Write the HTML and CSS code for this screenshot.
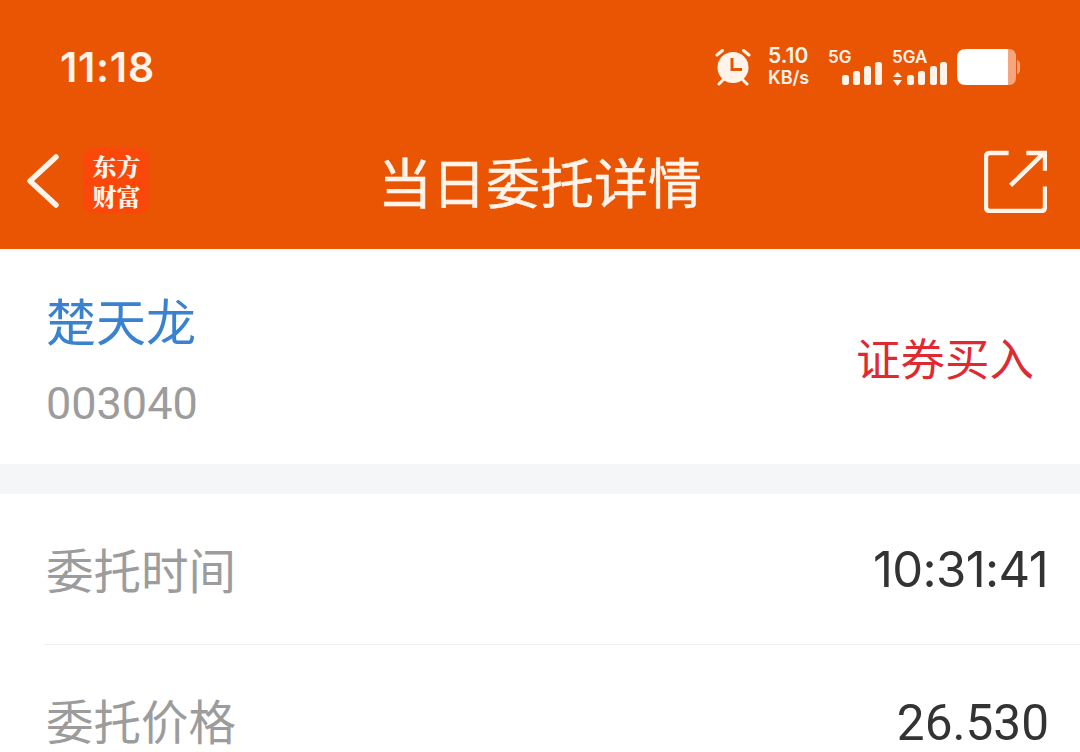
FILE: index.html
```html
<!DOCTYPE html>
<html lang="zh">
<head>
<meta charset="utf-8">
<title>当日委托详情</title>
<link rel="stylesheet" href="styles.css">
</head>
<body>
<div class="app">
  <header class="header">
    <div class="status">
      <span class="time">11:18</span>
      <div class="status-icons">
        <svg class="alarm" width="38" height="38" viewBox="0 0 38 38"><path d="M3 7 L8.5 2.5 M35 7 L29.5 2.5 M5 36 L10 31 M33 36 L28 31" stroke="#fff3ea" stroke-width="3" stroke-linecap="round"/><circle cx="19" cy="19.5" r="15.5" fill="#fff3ea"/><path d="M18 10 V21.5 H28" fill="none" stroke="#ea5504" stroke-width="3"/></svg>
        <div class="speed"><span>5.10</span><span class="unit">KB/s</span></div>
        <div class="signal sig-one">
          <span class="net">5G</span>
          <svg width="54" height="23" viewBox="0 0 54 23"><rect x="14" y="13" width="7" height="10" rx="2.5"/><rect x="25" y="9" width="7" height="14" rx="2.5"/><rect x="36" y="4" width="7" height="19" rx="2.5"/><rect x="47" y="0" width="7" height="23" rx="2.5"/></svg>
        </div>
        <div class="signal sig-two">
          <span class="net">5GA</span>
          <svg width="55" height="24" viewBox="0 0 55 24"><path d="M5.5 10 L10 15 H1 Z M5.5 24 L1 18 H10 Z" /><rect x="15" y="13" width="7" height="10" rx="2.5"/><rect x="26" y="9" width="7" height="14" rx="2.5"/><rect x="38" y="4" width="7" height="19" rx="2.5"/><rect x="48" y="0" width="7" height="23" rx="2.5"/></svg>
        </div>
        <svg class="battery" width="63" height="36" viewBox="0 0 63 36"><path d="M50 0 H52 Q59 0 59 8 V28 Q59 36 52 36 H50 Z M60 11 Q63 12 63 15 V21 Q63 24 60 25 Z" fill="#f6a67c"/><path d="M9 0 H51 V36 H9 Q0 36 0 27 V9 Q0 0 9 0 Z" fill="#fff"/></svg>
      </div>
    </div>
    <div class="nav">
      <div class="nav-left">
        <svg width="34" height="54" viewBox="0 0 34 54"><path d="M30 3 L4 27 L30 51" fill="none" stroke="#fff3ea" stroke-width="5.5" stroke-linecap="round" stroke-linejoin="round"/></svg>
        <div class="logo"><span>东方</span><span>财富</span></div>
      </div>
      <h1 class="title">当日委托详情</h1>
      <svg class="share" width="63" height="63" viewBox="0 0 64 64"><path d="M25 3 H6 Q2 3 2 7 V58 Q2 62 6 62 H58 Q62 62 62 58 V37" fill="none" stroke="#fff3ea" stroke-width="4.5"/><path d="M27 36 L61 3 M43 3 H62 V21" fill="none" stroke="#fff3ea" stroke-width="4.5"/></svg>
    </div>
  </header>
  <section class="stock">
    <div class="stock-info">
      <div class="stock-name">楚天龙</div>
      <div class="stock-code">003040</div>
    </div>
    <div class="stock-type">证券买入</div>
  </section>
  <div class="divider"></div>
  <section class="details">
    <div class="row">
      <span class="label">委托时间</span>
      <span class="value value-time">10:31:41</span>
    </div>
    <div class="row">
      <span class="label">委托价格</span>
      <span class="value value-price">26.530</span>
    </div>
  </section>
</div>
</body>
</html>
```
FILE: styles.css
```css
* { box-sizing: border-box; margin: 0; padding: 0; }
html, body { width: 1080px; height: 752px; overflow: hidden; background: #fff; }
body { font-family: "Noto Sans CJK SC", "Noto Sans", sans-serif; }
.app { width: 1080px; height: 752px; overflow: hidden; display: flex; flex-direction: column; }
.header { height: 249px; background: #ea5504; color: #fff; flex: none; }
.status { height: 115px; padding: 42px 60px 0 60px; display: flex; justify-content: space-between; align-items: flex-start; }
.time { font-family: Inter, sans-serif; font-size: 41px; font-weight: 600; letter-spacing: 0.7px; line-height: 50px; color: #fff3ea; }
.status-icons { display: flex; align-items: flex-start; color: #fff3ea; padding-top: 4px; }
.alarm { margin-right: 16px; margin-top: 2px; }
.speed { width: 43px; margin-right: 17px; margin-top: -1px; display: flex; flex-direction: column; font-family: Inter, sans-serif; font-weight: 600; font-size: 21px; line-height: 22px; white-space: nowrap; }
.speed .unit { font-size: 18px; line-height: 22px; }
.signal { position: relative; height: 40px; }
.signal svg { display: block; fill: #fff3ea; margin-top: 16px; }
.net { position: absolute; left: 0; top: 2px; font-family: Inter, sans-serif; font-weight: 600; font-size: 17px; line-height: 18px; }
.sig-one { width: 54px; margin-right: 10px; }
.sig-two { width: 55px; margin-right: 10px; }
.battery { margin-top: 3px; }
.nav { height: 134px; padding: 0 33px 2px 26px; display: flex; align-items: center; justify-content: space-between; position: relative; }
.nav-left { display: flex; align-items: center; gap: 23px; }
.logo { width: 67px; height: 66px; background: #f9480a; border-radius: 12px; display: flex; flex-direction: column; align-items: center; justify-content: center; font-family: "Noto Serif CJK SC", "Noto Sans CJK SC", sans-serif; font-size: 24px; font-weight: 900; line-height: 30px; color: #fff3ea; }
.title { position: absolute; left: 160px; right: 160px; text-align: center; font-size: 54px; font-weight: 400; -webkit-text-stroke: 0.5px #fff3ea; line-height: 70px; color: #fff3ea; }
.share { display: block; }
.stock { height: 215px; padding: 0 46px; display: flex; justify-content: space-between; align-items: center; flex: none; }
.stock-info { display: flex; flex-direction: column; }
.stock-name { font-size: 50px; line-height: 60px; color: #3a82d0; padding-top: 4px; }
.stock-code { font-family: Roboto, sans-serif; font-size: 45px; line-height: 50px; color: #9c9c9c; margin-top: 30px; }
.stock-type { font-size: 44.5px; line-height: 60px; color: #de2a30; }
.divider { height: 30px; background: #f5f6f8; flex: none; }
.details { padding-left: 44px; }
.row { height: 151px; padding: 0 31px 0 2px; display: flex; justify-content: space-between; align-items: center; border-bottom: 1px solid #efefef; }
.label { font-size: 47.5px; line-height: 60px; color: #9c9c9c; }
.value { line-height: 60px; color: #333; }
.value-time { font-family: Inter, sans-serif; font-size: 49px; font-weight: 400; letter-spacing: -0.6px; margin: 2px 1px 0 0; }
.value-price { font-family: Roboto, sans-serif; font-size: 49.5px; margin-top: 5px; }
```
